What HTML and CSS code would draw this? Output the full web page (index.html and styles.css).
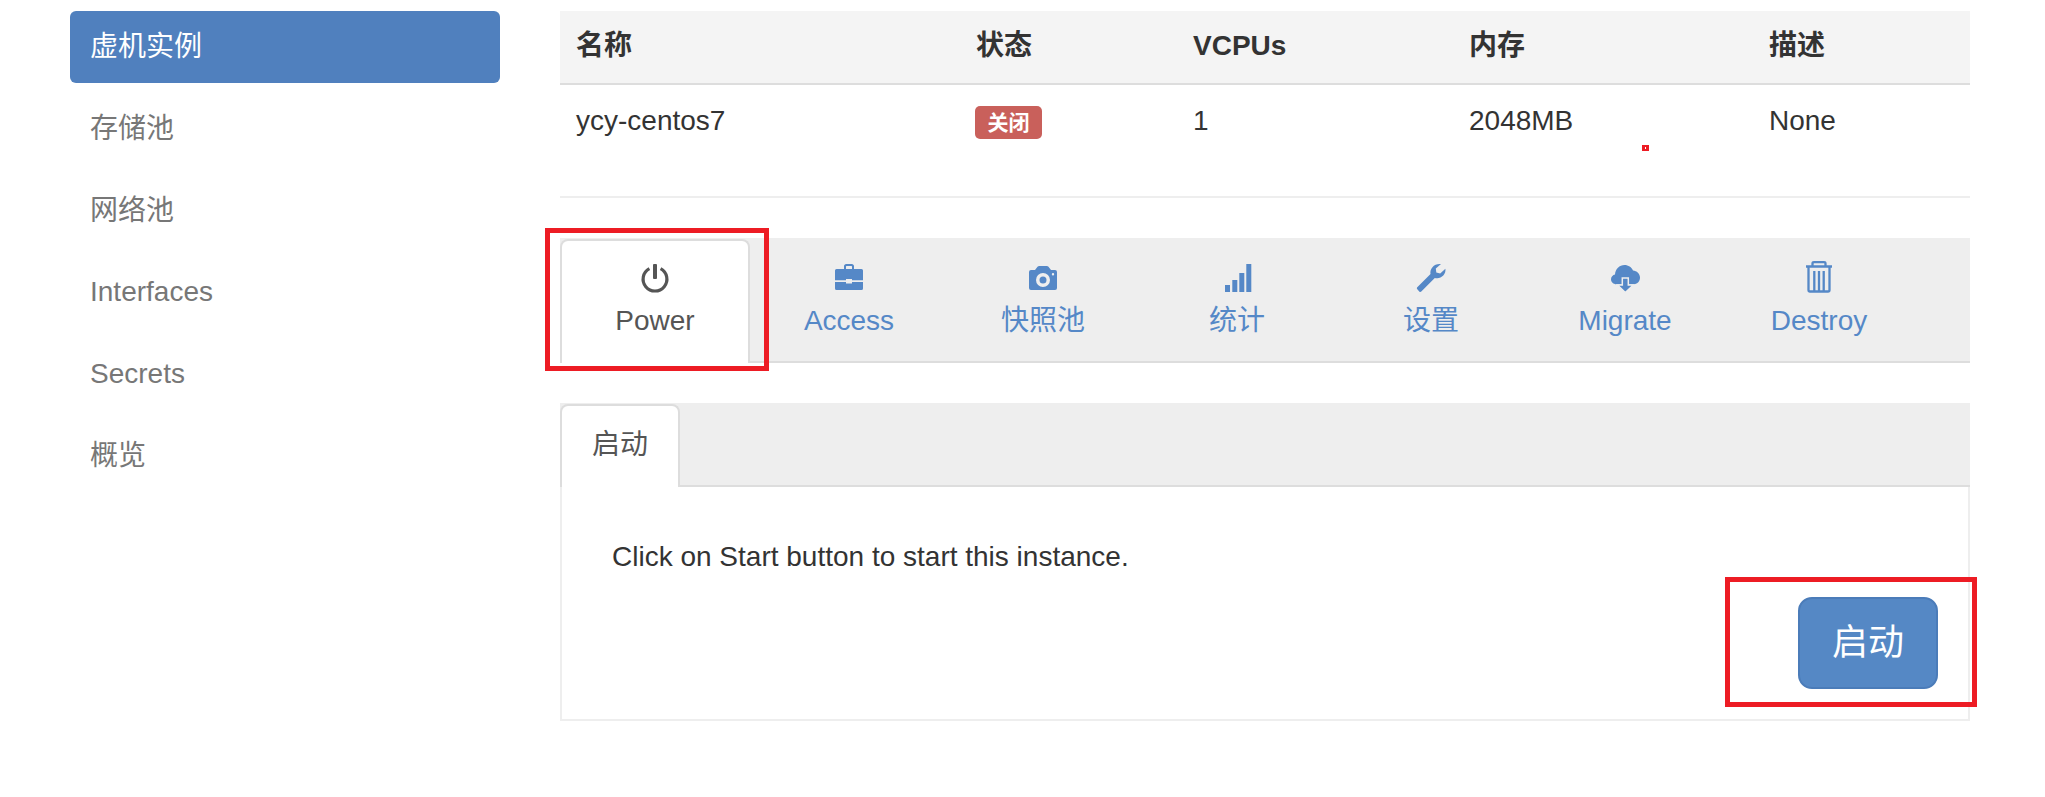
FILE: index.html
```html
<!DOCTYPE html>
<html lang="zh-CN">
<head>
<meta charset="utf-8">
<title>虚机实例</title>
<link rel="stylesheet" href="styles.css">
</head>
<body>
<div class="page">
  <nav class="side">
    <a class="pill active">虚机实例</a>
    <a class="pill">存储池</a>
    <a class="pill">网络池</a>
    <a class="pill">Interfaces</a>
    <a class="pill">Secrets</a>
    <a class="pill">概览</a>
  </nav>
  <main class="main">
    <table class="grid">
      <colgroup>
        <col class="c1"><col class="c2"><col class="c3"><col class="c4"><col class="c5">
      </colgroup>
      <thead>
        <tr><th>名称</th><th>状态</th><th>VCPUs</th><th>内存</th><th>描述</th></tr>
      </thead>
      <tbody>
        <tr><td>ycy-centos7</td><td><span class="badge">关闭</span></td><td>1</td><td>2048MB</td><td>None</td></tr>
      </tbody>
    </table>

    <ul class="tabs">
      <li class="tab on">
        <svg class="ico" viewBox="0 0 28 28"><path class="ln" d="M8.400 4.600A11.900 11.900 0 1 0 19.600 4.600"/><rect x="12" y="0" width="4" height="15" rx="1"/></svg>
        <span>Power</span>
      </li>
      <li class="tab">
        <svg class="ico" viewBox="0 0 28 28"><path d="M9 5V2.200C9 1 10 0 11.200 0h5.600C18 0 19 1 19 2.200V5h-2V2.600c0-.4-.2-.6-.6-.6h-4.800c-.4 0-.6.2-.6.6V5z"/><path d="M1.500 5h25A1.500 1.500 0 0 1 28 6.500V16.300H17V15h-6v1.300H0V6.500A1.500 1.500 0 0 1 1.500 5z"/><path d="M0 18h11v1.500h6V18h11v6.500A1.500 1.500 0 0 1 26.500 26h-25A1.500 1.500 0 0 1 0 24.500z"/></svg>
        <span>Access</span>
      </li>
      <li class="tab">
        <svg class="ico" viewBox="0 0 28 28"><path fill-rule="evenodd" d="M2 6h4l2.500-3.200C9 2.300 9.500 2 10.200 2h7.600c.7 0 1.200.3 1.700.8L22 6h4a2 2 0 0 1 2 2v16a2 2 0 0 1-2 2H2a2 2 0 0 1-2-2V8a2 2 0 0 1 2-2zM14 9a7 7 0 1 0 0 14 7 7 0 0 0 0-14zM14 12.500a3.500 3.500 0 1 1 0 7 3.500 3.500 0 0 1 0-7zM24 9a1.200 1.200 0 1 0 0 2.400A1.200 1.200 0 0 0 24 9z"/></svg>
        <span>快照池</span>
      </li>
      <li class="tab">
        <svg class="ico" viewBox="0 0 28 28"><rect x="2" y="21" width="5" height="7"/><rect x="9.300" y="16" width="5" height="12"/><rect x="16.300" y="9" width="5" height="19"/><rect x="23.300" y="0" width="5" height="28"/></svg>
        <span>统计</span>
      </li>
      <li class="tab">
        <svg class="ico" viewBox="0 0 28 28"><path d="M0 23.500L13.500 10C12.600 4.800 17 -.6 24 .1L18.800 4.600L19.300 8.500L23.200 9.400L28.400 4.800C29.200 11 23.500 15.500 17.800 13.900L4.300 27.600C3.700 28.200 3 28.200 2.500 27.700L.3 25.300C-.2 24.800 -.3 24 0 23.500z"/></svg>
        <span>设置</span>
      </li>
      <li class="tab">
        <svg class="ico" viewBox="0 0 28 28"><path d="M5.500 20.300C2.300 20.300 0 18 0 15.300C0 12.800 1.800 11 4 10.500C4.300 5 8.500 1 13.500 1C17.500 1 20.500 3.300 22 6.500C25.800 6.800 29 9.800 29 13.500C29 17.500 26 20.300 22.300 20.300z"/><path class="cut" d="M11.300 14h6v7h5L14.300 28.500L6.500 21h4.800z"/></svg>
        <span>Migrate</span>
      </li>
      <li class="tab">
        <svg class="ico" viewBox="0 0 28 28"><path class="thin" d="M1 2.500H27M7.500 2.500V-.5C7.500 -1.500 8.300 -1.800 9 -1.800H19C19.700 -1.800 20.500 -1.500 20.500 -.5V2.500M3.500 2.500V26C3.500 27 4 27.500 5 27.500H23C24 27.500 24.500 27 24.500 26V2.500M9.300 7V27M14 7V27M18.700 7V27"/></svg>
        <span>Destroy</span>
      </li>
    </ul>

    <section class="box">
      <ul class="subtabs">
        <li class="subtab">启动</li>
      </ul>
      <div class="panel">
        <p class="msg">Click on Start button to start this instance.</p>
        <button class="start" type="button">启动</button>
      </div>
    </section>

    <i class="mark mark-tab"></i>
    <i class="mark mark-btn"></i>
    <i class="mark mark-dot"></i>
  </main>
</div>
</body>
</html>
```

FILE: styles.css
```css
* { box-sizing: border-box; }

html, body { margin: 0; padding: 0; background: #fff; }

body {
  font-family: "Liberation Sans", "Noto Sans CJK SC", sans-serif;
  font-size: 28px;
  line-height: 40px;
  color: #333;
}

.page {
  display: flex;
  gap: 60px;
  width: 1970px;
  padding: 11px 0 0 70px;
}

.side {
  flex: 0 0 430px;
  display: flex;
  flex-direction: column;
  gap: 9.800px;
}

.pill {
  display: block;
  height: 72px;
  padding: 16px 20px;
  border-radius: 6px;
  color: #777;
}

.pill.active { background: #5080be; color: #fff; }

.main { position: relative; flex: 0 0 1410px; }

.grid {
  width: 1410px;
  table-layout: fixed;
  border-collapse: collapse;
  border-bottom: 2px solid #eee;
}

.c1 { width: 400px; }
.c2 { width: 217px; }
.c3 { width: 276px; }
.c4 { width: 300px; }
.c5 { width: 217px; }

.grid th {
  height: 73px;
  padding: 0 16px 2px;
  background: #f4f4f4;
  border-bottom: 2px solid #ddd;
  text-align: left;
  font-weight: 700;
}

.grid td {
  height: 113px;
  padding: 16px 16px 0;
  vertical-align: top;
}

.badge {
  display: block;
  width: 67px;
  height: 33px;
  margin: 5px 0 0 -1px;
  border-radius: 5px;
  background: #c9605b;
  color: #fff;
  font-size: 21px;
  font-weight: 700;
  line-height: 33px;
  text-align: center;
}

.tabs {
  display: flex;
  gap: 4px;
  height: 125px;
  margin: 40px 0;
  padding: 1px 0 0;
  list-style: none;
  background: #eee;
  border-bottom: 2px solid #ddd;
}

.tab {
  display: flex;
  flex-direction: column;
  align-items: center;
  width: 190px;
  height: 124px;
  padding-top: 23px;
  border: 2px solid transparent;
  border-bottom: 0;
  border-radius: 8px 8px 0 0;
  color: #5588c7;
}

.tab span { margin-top: 9px; }

.tab.on {
  background: #fff;
  border-color: #ddd;
  color: #555;
}

.ico {
  display: block;
  width: 28px;
  height: 28px;
  overflow: visible;
  fill: currentColor;
}

.ln { fill: none; stroke: currentColor; stroke-width: 3.200; }
.thin { fill: none; stroke: currentColor; stroke-width: 2.300; }
.cut { stroke: #eee; stroke-width: 1.500; }

.subtabs {
  display: flex;
  height: 84px;
  margin: 0;
  padding: 1px 0 0;
  list-style: none;
  background: #eee;
  border-bottom: 2px solid #ddd;
}

.subtab {
  width: 120px;
  height: 83px;
  padding-top: 19px;
  background: #fff;
  border: 2px solid #ddd;
  border-bottom: 0;
  border-radius: 8px 8px 0 0;
  color: #555;
  text-align: center;
}

.panel {
  display: flex;
  flex-direction: column;
  height: 234px;
  padding: 50px 30px 30px 50px;
  border: 2px solid #eee;
  border-top: 0;
}

.msg { margin: 0 0 20px; }

.start {
  align-self: flex-end;
  width: 140px;
  height: 92px;
  padding: 0;
  border: 2px solid #4b7cb9;
  border-radius: 14px;
  background: #5588c5;
  color: #fff;
  font: inherit;
  font-size: 36px;
}

.mark { position: absolute; display: block; border: 5px solid #ed1c24; }

.mark-tab { left: -15px; top: 217px; width: 224px; height: 143px; }
.mark-btn { left: 1165px; top: 566px; width: 252px; height: 130px; }
.mark-dot { left: 1082px; top: 134px; width: 7px; height: 6px; border-width: 2px 3px; }
```
